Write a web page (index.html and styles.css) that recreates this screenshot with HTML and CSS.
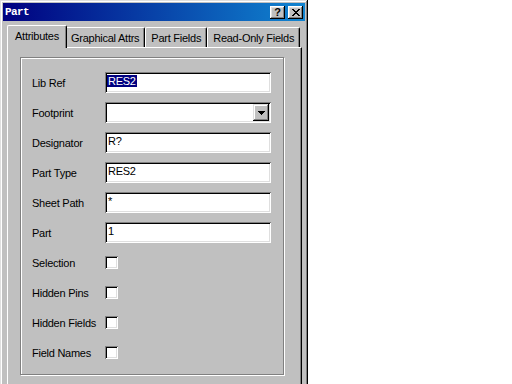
FILE: index.html
```html
<!DOCTYPE html>
<html lang="en">
<head>
    <meta charset="UTF-8">
    <title>Part</title>
    <link rel="stylesheet" href="styles.css">
</head>
<body>
<div class="window">
    <div class="titlebar">
        <span class="title">Part</span>
        <div class="cap-buttons">
            <div class="cap-btn help">?</div>
            <div class="cap-btn">
                <svg width="8" height="7" viewBox="0 0 8 7"><path d="M0 0h2v1h-2z M6 0h2v1h-2z M1 1h2v1h-2z M5 1h2v1h-2z M2 2h4v1h-4z M3 3h2v1h-2z M2 4h4v1h-4z M1 5h2v1h-2z M5 5h2v1h-2z M0 6h2v1h-2z M6 6h2v1h-2z" fill="#000"/></svg>
            </div>
        </div>
    </div>

    <div class="tabs">
        <div class="tab active">Attributes</div>
        <div class="tab">Graphical Attrs</div>
        <div class="tab">Part Fields</div>
        <div class="tab">Read-Only Fields</div>
    </div>

    <div class="panel">
        <div class="group">
            <div class="row">
                <span class="label">Lib Ref</span>
                <div class="field"><span class="sel">RES2</span></div>
            </div>
            <div class="row">
                <span class="label">Footprint</span>
                <div class="field combo">
                    <div class="drop-btn">
                        <svg width="7" height="4" viewBox="0 0 7 4"><path d="M0 0h7v1h-7z M1 1h5v1h-5z M2 2h3v1h-3z M3 3h1v1h-1z" fill="#000"/></svg>
                    </div>
                </div>
            </div>
            <div class="row">
                <span class="label">Designator</span>
                <div class="field"><span class="val">R?</span></div>
            </div>
            <div class="row">
                <span class="label">Part Type</span>
                <div class="field"><span class="val">RES2</span></div>
            </div>
            <div class="row">
                <span class="label">Sheet Path</span>
                <div class="field"><span class="val">*</span></div>
            </div>
            <div class="row">
                <span class="label">Part</span>
                <div class="field"><span class="val">1</span></div>
            </div>
            <div class="row">
                <span class="label">Selection</span>
                <div class="check"></div>
            </div>
            <div class="row">
                <span class="label">Hidden Pins</span>
                <div class="check"></div>
            </div>
            <div class="row">
                <span class="label">Hidden Fields</span>
                <div class="check"></div>
            </div>
            <div class="row">
                <span class="label">Field Names</span>
                <div class="check"></div>
            </div>
        </div>
    </div>
</div>
</body>
</html>
```

FILE: styles.css
```css
html, body {
    margin: 0;
    height: 384px;
    overflow: hidden;
    background: #fff;
}
body {
    font-family: "Liberation Sans", Arial, sans-serif;
    font-size: 11px;
    letter-spacing: -0.25px;
    color: #000;
}
.window {
    width: 308px;
    height: 400px;
    box-sizing: border-box;
    padding: 3px;
    background: #c0c0c0;
    box-shadow: inset -1px -1px #000, inset 1px 1px #dfdfdf, inset -2px -2px #808080, inset 2px 2px #fff;
}
.titlebar {
    height: 18px;
    display: flex;
    align-items: center;
    justify-content: space-between;
    padding: 0 2px;
    background: linear-gradient(to right, #000080, #1084d0);
}
.title {
    color: #fff;
    font-family: "Liberation Mono", monospace;
    font-weight: bold;
    font-size: 11px;
    letter-spacing: -0.6px;
}
.cap-buttons {
    display: flex;
    gap: 3px;
}
.cap-btn {
    width: 15px;
    height: 13px;
    display: flex;
    align-items: center;
    justify-content: center;
    background: #c0c0c0;
    box-shadow: inset -1px -1px #000, inset 1px 1px #fff, inset -2px -2px #808080, inset 2px 2px #dfdfdf;
}
.cap-btn.help {
    font-weight: bold;
    font-size: 11px;
    line-height: 13px;
    letter-spacing: 0;
}

/* tab strip */
.tabs {
    display: flex;
    align-items: flex-end;
    height: 22px;
    margin: 4px 0 0 4px;
    padding-left: 2px;
}
.tab {
    height: 20px;
    box-sizing: border-box;
    display: flex;
    align-items: center;
    padding: 0 5px;
    border-top: 1px solid #fff;
    border-left: 1px solid #fff;
    border-right: 1px solid #000;
    border-radius: 2px 2px 0 0;
    box-shadow: inset -1px 0 #808080;
    white-space: nowrap;
}
.tab.active {
    position: relative;
    z-index: 2;
    height: 23px;
    margin: 0 -2px -1px;
    padding: 0 7px 3px;
    background: #c0c0c0;
}

.panel {
    width: 295px;
    height: 340px;
    box-sizing: border-box;
    margin-left: 4px;
    padding: 9px 0 0 12px;
    border-top: 1px solid #fff;
    border-left: 1px solid #fff;
    border-right: 1px solid #000;
    box-shadow: inset -1px 0 #808080;
}
.group {
    width: 264px;
    height: 318px;
    box-sizing: border-box;
    padding: 14px 0 0 11px;
    border: 1px solid #808080;
    box-shadow: inset 1px 1px #fff, 1px 1px #fff;
    display: flex;
    flex-direction: column;
    gap: 9px;
}
.row {
    height: 21px;
    display: flex;
    align-items: center;
}
.label {
    width: 73px;
}
.field {
    width: 166px;
    height: 21px;
    box-sizing: border-box;
    padding: 2px 2px 0 2px;
    background: #fff;
    box-shadow: inset 1px 1px #808080, inset -1px -1px #fff, inset 2px 2px #000, inset -2px -2px #dfdfdf;
    line-height: 14px;
}
.val {
    padding-left: 1px;
}
.sel {
    background: #000080;
    color: #fff;
    padding: 0 1px;
}
.combo {
    display: flex;
    justify-content: flex-end;
    padding: 2px;
}
.drop-btn {
    width: 16px;
    height: 17px;
    display: flex;
    align-items: center;
    justify-content: center;
    background: #c0c0c0;
    box-shadow: inset -1px -1px #000, inset 1px 1px #dfdfdf, inset -2px -2px #808080, inset 2px 2px #fff;
}
.check {
    width: 13px;
    height: 13px;
    box-sizing: border-box;
    background: #fff;
    box-shadow: inset 1px 1px #808080, inset -1px -1px #fff, inset 2px 2px #000, inset -2px -2px #dfdfdf;
}
```
